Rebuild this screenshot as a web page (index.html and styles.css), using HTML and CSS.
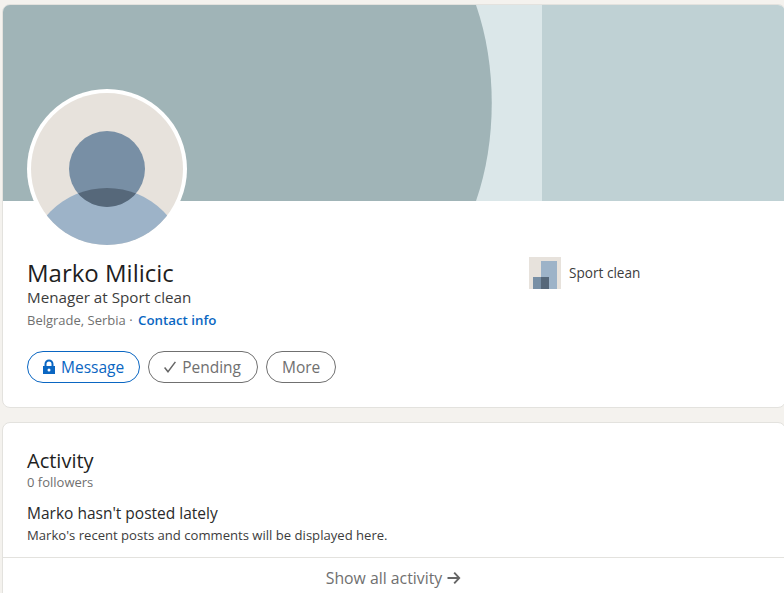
FILE: index.html
```html
<!DOCTYPE html>
<html lang="en">
<head>
    <meta charset="UTF-8">
    <title>Marko Milicic</title>
    <link rel="stylesheet" href="styles.css">
</head>
<body>
    <section class="card profile">
        <div class="banner">
            <svg viewBox="0 0 782 196" width="782" height="196">
                <rect width="782" height="196" fill="#bfd1d4"/>
                <rect width="539" height="196" fill="#dbe7e9"/>
                <path d="M0 0H473C494 60 494 136 473 196H0Z" fill="#a0b4b7"/>
            </svg>
        </div>
        <div class="avatar">
            <svg viewBox="0 0 152 152" width="152" height="152">
                <defs>
                    <clipPath id="head"><circle cx="76" cy="76" r="38"/></clipPath>
                    <clipPath id="disc"><circle cx="76" cy="76" r="76"/></clipPath>
                </defs>
                <g clip-path="url(#disc)">
                    <rect width="152" height="152" fill="#e7e2dc"/>
                    <circle cx="76" cy="175" r="80" fill="#9db3c8"/>
                    <circle cx="76" cy="76" r="38" fill="#788fa5"/>
                    <circle cx="76" cy="175" r="80" fill="#56687a" clip-path="url(#head)"/>
                </g>
            </svg>
        </div>
        <div class="intro">
            <div class="who">
                <h1 class="name">Marko Milicic</h1>
                <div class="headline">Menager at Sport clean</div>
                <div class="place">Belgrade, Serbia <span class="dot">·</span> <a class="contact" href="#">Contact info</a></div>
            </div>
            <div class="company">
                <svg viewBox="0 0 32 32" width="32" height="32">
                    <rect width="32" height="32" fill="#e7e2dc"/>
                    <rect x="12" y="4" width="16" height="28" fill="#9db3c8"/>
                    <rect x="4" y="20" width="16" height="12" fill="#788fa5"/>
                    <rect x="12" y="20" width="8" height="12" fill="#56687a"/>
                </svg>
                <span>Sport clean</span>
            </div>
        </div>
        <div class="actions">
            <a class="btn primary has-icon" href="#">
                <svg viewBox="0 0 16 16" width="16" height="16"><path d="M12.500 7V5a4.500 4.500 0 0 0-9 0v2H2v8h12V7ZM5.500 5a2.500 2.500 0 0 1 5 0v2h-5Z" fill="#0a66c2" fill-rule="evenodd"/><circle cx="8" cy="11" r="1.500" fill="#fff"/></svg>
                Message
            </a>
            <a class="btn has-icon" href="#">
                <svg viewBox="0 0 16 16" width="16" height="16"><path d="M2 9 3.200 8 6 11.500 12.800 2.500 14 3.300 6 14Z" fill="#666"/></svg>
                Pending
            </a>
            <a class="btn" href="#">More</a>
        </div>
    </section>

    <section class="card activity">
        <div class="activity-top">
            <h2>Activity</h2>
            <div class="followers">0 followers</div>
            <h3>Marko hasn't posted lately</h3>
            <p>Marko's recent posts and comments will be displayed here.</p>
        </div>
        <a class="show-all" href="#">
            Show all activity
            <svg viewBox="0 0 16 16" width="16" height="16"><path d="M1.500 7H11L7.500 3.300 8.900 2 14.500 8 8.900 14 7.500 12.700 11 9H1.500Z" fill="#666"/></svg>
        </a>
    </section>
</body>
</html>
```

FILE: styles.css
```css
*, *:before, *:after {
    box-sizing: border-box;
}

:root {
    --page: #f4f2ee;
    --line: #e3e2de;
    --dark: #1f1f1f;
    --text: #3c3c3c;
    --grey: #707070;
    --blue: #0a66c2;
}

html, body {
    height: 100%;
    overflow: hidden;
}

body {
    margin: 0;
    padding: 4px 0 0 2px;
    width: 786px;
    background-color: var(--page);
    color: var(--dark);
    font-family: "Open Sans", "Noto Sans", sans-serif;
}

.card {
    background-color: #fff;
    border: 1px solid var(--line);
    border-radius: 8px;
    overflow: hidden;
}

.profile {
    height: 404px;
    margin-bottom: 14px;
}

.banner {
    height: 196px;
}

.banner svg {
    display: block;
}

.avatar {
    width: 160px;
    height: 160px;
    margin: -112px 0 0 24px;
    padding: 4px;
    position: relative;
    background-color: #fff;
    border-radius: 50%;
}

.avatar svg {
    display: block;
}

.intro {
    display: flex;
    padding: 10px 0 0 24px;
}

.who {
    width: 502px;
}

.name {
    margin: 0;
    font-size: 24px;
    font-weight: 500;
    line-height: 28px;
}

.headline {
    font-size: 15.200px;
    line-height: 20px;
    color: var(--text);
}

.place {
    margin-top: 3px;
    font-size: 13px;
    line-height: 20px;
    color: var(--grey);
}

.dot {
    margin-right: 2px;
}

.contact {
    color: var(--blue);
    font-size: 13.300px;
    font-weight: 600;
    text-decoration: none;
}

.company {
    display: flex;
    align-items: center;
    gap: 8px;
    height: 32px;
    font-size: 13.600px;
    color: var(--text);
    margin-top: -2px;
}

.company svg {
    display: block;
}

.company span {
    padding-bottom: 2px;
}

.actions {
    display: flex;
    gap: 8px;
    padding: 21px 0 0 24px;
}

.btn {
    display: flex;
    align-items: center;
    gap: 4px;
    height: 32px;
    padding: 0 15px;
    border: 1px solid var(--grey);
    border-radius: 16px;
    font-size: 15.500px;
    color: var(--grey);
    text-decoration: none;
}

.btn.has-icon {
    padding: 0 16px 0 13px;
}

.btn.primary {
    border-color: var(--blue);
    color: var(--blue);
    padding-right: 15px;
}

.activity {
    height: 200px;
}

.activity-top {
    padding: 25px 24px 0;
    height: 135px;
    border-bottom: 1px solid var(--line);
}

.activity h2 {
    margin: 0;
    font-size: 20px;
    font-weight: 500;
    line-height: 26px;
}

.followers {
    margin-top: 1px;
    font-size: 13px;
    line-height: 14px;
    color: var(--grey);
}

.activity h3 {
    margin: 13px 0 0;
    font-size: 15.500px;
    font-weight: 500;
    line-height: 22px;
    color: #2a2a2a;
}

.activity p {
    margin: 2px 0 0;
    font-size: 13.100px;
    line-height: 18px;
    color: var(--text);
}

.show-all {
    display: flex;
    justify-content: center;
    align-items: center;
    gap: 4px;
    height: 40px;
    font-size: 15.800px;
    color: var(--grey);
    text-decoration: none;
}
```
